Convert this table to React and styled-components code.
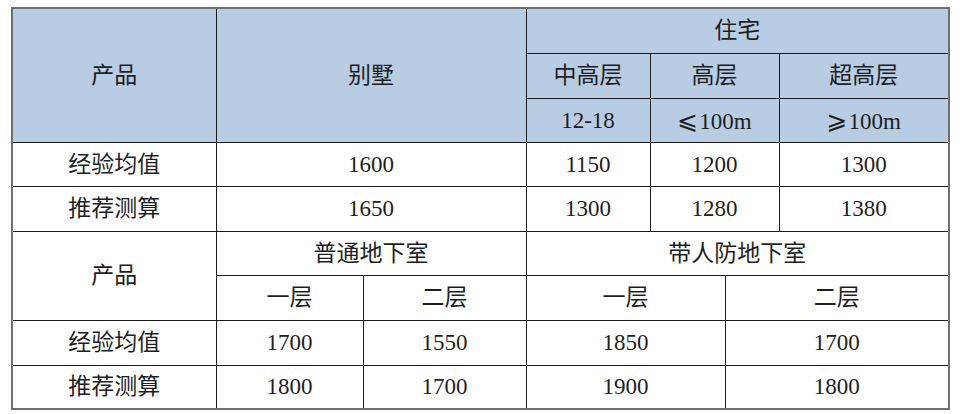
import React from 'react'
import styled, { createGlobalStyle } from 'styled-components'

const GlobalStyle = createGlobalStyle`
  html, body {
    margin: 0;
    padding: 0;
    background: #ffffff;
  }
`;

const Page = styled.div`
  padding: 7px 0 0 11px;
`;

const Table = styled.table`
  width: 937px;
  table-layout: fixed;
  border-collapse: collapse;
  border: 2px solid #707070;
  font-family: "Liberation Serif", "Noto Sans CJK SC", serif;
  font-size: 23px;
  color: #1e1e1e;
`;

const Row = styled.tr`
  height: ${(props) => props.h || 44}px;
`;

const Cell = styled.td`
  padding: 0;
  text-align: center;
  vertical-align: middle;
  border: 1px solid #1c1c1c;
  background-color: ${(props) => (props.head ? "#b8cce4" : "#ffffff")};
  line-height: 1;
`;

// slanted comparison sign, as in the source sheet
const Sign = styled.span`
  font-family: "DejaVu Serif", "DejaVu Sans", serif;
  font-size: 25px;
  margin-right: 1px;
`;

const colWidths = [204, 147, 163, 124, 75, 54, 170];

const App = () => {
  return (
    <Page>
      <GlobalStyle />
      <Table>
        <colgroup>
          {colWidths.map((w, i) => (
            <col key={i} style={{ width: w }} />
          ))}
        </colgroup>
        <tbody>
          <Row h={45}>
            <Cell head rowSpan={3}>产品</Cell>
            <Cell head rowSpan={3} colSpan={2}>别墅</Cell>
            <Cell head colSpan={4}>住宅</Cell>
          </Row>
          <Row h={45}>
            <Cell head>中高层</Cell>
            <Cell head colSpan={2}>高层</Cell>
            <Cell head>超高层</Cell>
          </Row>
          <Row h={44}>
            <Cell head>12-18</Cell>
            <Cell head colSpan={2}><Sign>⩽</Sign>100m</Cell>
            <Cell head><Sign>⩾</Sign>100m</Cell>
          </Row>
          <Row h={44}>
            <Cell>经验均值</Cell>
            <Cell colSpan={2}>1600</Cell>
            <Cell>1150</Cell>
            <Cell colSpan={2}>1200</Cell>
            <Cell>1300</Cell>
          </Row>
          <Row h={45}>
            <Cell>推荐测算</Cell>
            <Cell colSpan={2}>1650</Cell>
            <Cell>1300</Cell>
            <Cell colSpan={2}>1280</Cell>
            <Cell>1380</Cell>
          </Row>
          <Row h={44}>
            <Cell rowSpan={2}>产品</Cell>
            <Cell colSpan={2}>普通地下室</Cell>
            <Cell colSpan={4}>带人防地下室</Cell>
          </Row>
          <Row h={45}>
            <Cell>一层</Cell>
            <Cell>二层</Cell>
            <Cell colSpan={2}>一层</Cell>
            <Cell colSpan={2}>二层</Cell>
          </Row>
          <Row h={45}>
            <Cell>经验均值</Cell>
            <Cell>1700</Cell>
            <Cell>1550</Cell>
            <Cell colSpan={2}>1850</Cell>
            <Cell colSpan={2}>1700</Cell>
          </Row>
          <Row h={44}>
            <Cell>推荐测算</Cell>
            <Cell>1800</Cell>
            <Cell>1700</Cell>
            <Cell colSpan={2}>1900</Cell>
            <Cell colSpan={2}>1800</Cell>
          </Row>
        </tbody>
      </Table>
    </Page>
  );
};

export default App;
